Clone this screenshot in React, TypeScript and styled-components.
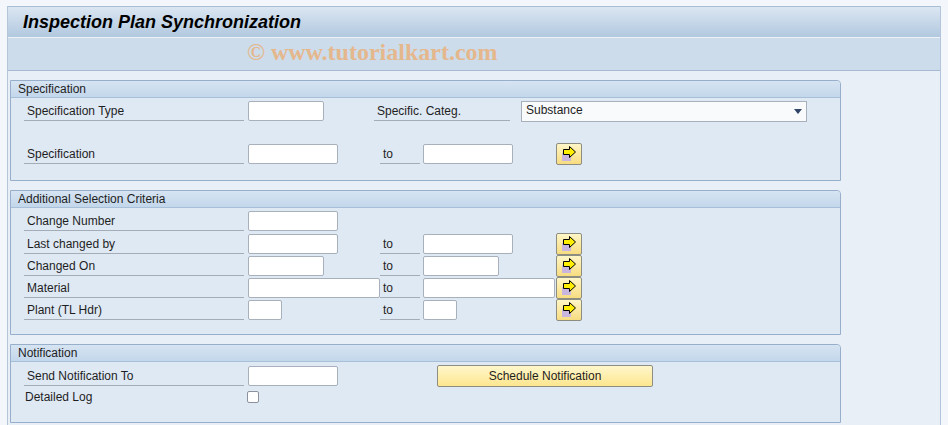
import React from "react";
import styled, { createGlobalStyle } from "styled-components";

const GlobalStyle = createGlobalStyle`
  html, body {
    margin: 0;
    padding: 0;
    background: #f3f6fa;
    font-family: "Liberation Sans", Arial, sans-serif;
    font-size: 12px;
    color: #1e1e1e;
  }
`;

const Frame = styled.div`
  margin: 6px 0 0 7px;
  width: 934px;
  box-sizing: border-box;
  border-left: 1px solid #b3c5d9;
  border-right: 1px solid #b3c5d9;
  background: #e8eff7;
  height: 419px;
`;

const TitleBar = styled.div`
  height: 31px;
  box-sizing: border-box;
  border-top: 1px solid #a9bdd4;
  background: linear-gradient(#dbe6f2, #b2c8df);
  padding-left: 15px;
  display: flex;
  align-items: center;
`;

const Title = styled.h1`
  margin: 0;
  font-size: 18px;
  font-weight: bold;
  font-style: italic;
  color: #000;
`;

const Toolbar = styled.div`
  height: 34px;
  box-sizing: border-box;
  border-top: 1px solid #eef3f9;
  border-bottom: 1px solid #a6bbd1;
  background: #cddcea;
  display: flex;
  align-items: center;
  padding-left: 239px;
  padding-bottom: 3px;
`;

const Watermark = styled.span`
  font-family: "Liberation Serif", "Times New Roman", serif;
  font-weight: bold;
  font-size: 24px;
  color: #e8b484;
  opacity: 0.9;
`;

const Content = styled.div`
  padding: 9px 0 0 2px;
`;

const Group = styled.section`
  width: 831px;
  box-sizing: border-box;
  border: 1px solid #97afcb;
  border-radius: 0 4px 0 0;
  background: #dfe9f4;
  margin-bottom: 9px;
`;

const GroupHeader = styled.div`
  height: 17px;
  box-sizing: border-box;
  border-bottom: 1px solid #a7bfd8;
  background: linear-gradient(#d6e4f2, #c3d7eb);
  padding-left: 7px;
  line-height: 16px;
  border-radius: 0 3px 0 0;
`;

const GroupBody = styled.div<{ $bottom: number }>`
  padding: 3px 0 ${(p) => p.$bottom}px 13px;
`;

const Row = styled.div<{ $gapTop?: number }>`
  display: grid;
  grid-template-columns: 224px 132px 43px 133px 26px;
  align-items: center;
  height: 20px;
  margin-bottom: 2px;
  margin-top: ${(p) => p.$gapTop || 0}px;
`;

const FlexRow = styled.div`
  display: flex;
  align-items: center;
  height: 20px;
  margin-bottom: 2px;
`;

const Label = styled.div<{ $width?: number; $plain?: boolean }>`
  width: ${(p) => p.$width || 220}px;
  height: 20px;
  box-sizing: border-box;
  padding-left: ${(p) => (p.$plain ? 1 : 3)}px;
  line-height: 21px;
  border-bottom: ${(p) => (p.$plain ? "none" : "1px solid #a4acb7")};
  white-space: nowrap;
`;

const Field = styled.div<{ $width: number }>`
  width: ${(p) => p.$width}px;
  height: 20px;
  box-sizing: border-box;
  border: 1px solid #a8b0bb;
  border-radius: 2px;
  background: #fff;
`;

const Select = styled.div`
  margin-left: 11px;
  width: 286px;
  height: 21px;
  box-sizing: border-box;
  border: 1px solid #a8b0bb;
  background: #f9fafb;
  display: flex;
  align-items: center;
  justify-content: space-between;
  padding: 0 4px 2px 4px;
`;

const Caret = styled.span`
  width: 0;
  height: 0;
  border-left: 4px solid transparent;
  border-right: 4px solid transparent;
  border-top: 5px solid #2f4466;
  margin-top: 2px;
`;

const IconButton = styled.button`
  width: 26px;
  height: 22px;
  padding: 0;
  border: 1px solid #8d8d82;
  border-radius: 2px;
  background: linear-gradient(#fff6c6, #f7dc80);
  display: flex;
  align-items: center;
  justify-content: center;
`;

const PushButton = styled.button`
  grid-column: 3 / span 3;
  margin-left: 57px;
  width: 216px;
  height: 22px;
  border: 1px solid #8d8d82;
  border-radius: 2px;
  background: linear-gradient(#fff7cc, #fde68f);
  font-family: "Liberation Sans", Arial, sans-serif;
  font-size: 12px;
  color: #1e1e1e;
  padding: 0;
`;

const Check = styled.div`
  width: 12px;
  height: 12px;
  box-sizing: border-box;
  border: 1px solid #8b929c;
  border-radius: 2px;
  background: #fff;
  margin-left: -1px;
`;

const Spacer = styled.div<{ $width: number }>`
  width: ${(p) => p.$width}px;
`;

const MultiArrow = () => (
  <IconButton>
    <svg width="24" height="20" viewBox="0 0 24 20">
      <rect x="5" y="9" width="9" height="8" fill="#c9b6de" />
      <polygon
        points="6.5,5.5 12.5,5.5 12.5,2.5 18.5,8 12.5,13.5 12.5,10.5 6.5,10.5"
        fill="#ffee00"
        stroke="#000"
        strokeWidth="1"
        strokeLinejoin="miter"
      />
    </svg>
  </IconButton>
);

type RangeProps = {
  label: string;
  from: number;
  to?: number;
  gapTop?: number;
};

const RangeRow = ({ label, from, to, gapTop }: RangeProps) => (
  <Row $gapTop={gapTop}>
    <Label>{label}</Label>
    <Field $width={from} />
    {to ? (
      <>
        <Label $width={40}>to</Label>
        <Field $width={to} />
        <MultiArrow />
      </>
    ) : null}
  </Row>
);

export default function App() {
  return (
    <>
      <GlobalStyle />
      <Frame>
        <TitleBar>
          <Title>Inspection Plan Synchronization</Title>
        </TitleBar>
        <Toolbar>
          <Watermark>© www.tutorialkart.com</Watermark>
        </Toolbar>
        <Content>
          <Group>
            <GroupHeader>Specification</GroupHeader>
            <GroupBody $bottom={15}>
              <FlexRow>
                <Label>Specification Type</Label>
                <Spacer $width={4} />
                <Field $width={76} />
                <Spacer $width={50} />
                <Label $width={136}>Specific. Categ.</Label>
                <Select>
                  <span>Substance</span>
                  <Caret />
                </Select>
              </FlexRow>
              <RangeRow label="Specification" from={90} to={90} gapTop={22} />
            </GroupBody>
          </Group>

          <Group>
            <GroupHeader>Additional Selection Criteria</GroupHeader>
            <GroupBody $bottom={13}>
              <RangeRow label="Change Number" from={90} />
              <RangeRow label="Last changed by" from={90} to={90} />
              <RangeRow label="Changed On" from={76} to={76} />
              <RangeRow label="Material" from={132} to={132} />
              <RangeRow label="Plant (TL Hdr)" from={34} to={34} />
            </GroupBody>
          </Group>

          <Group>
            <GroupHeader>Notification</GroupHeader>
            <GroupBody $bottom={13}>
              <Row>
                <Label>Send Notification To</Label>
                <Field $width={90} />
                <PushButton>Schedule Notification</PushButton>
              </Row>
              <Row $gapTop={1}>
                <Label $plain>Detailed Log</Label>
                <Check />
              </Row>
            </GroupBody>
          </Group>
        </Content>
      </Frame>
    </>
  );
}
